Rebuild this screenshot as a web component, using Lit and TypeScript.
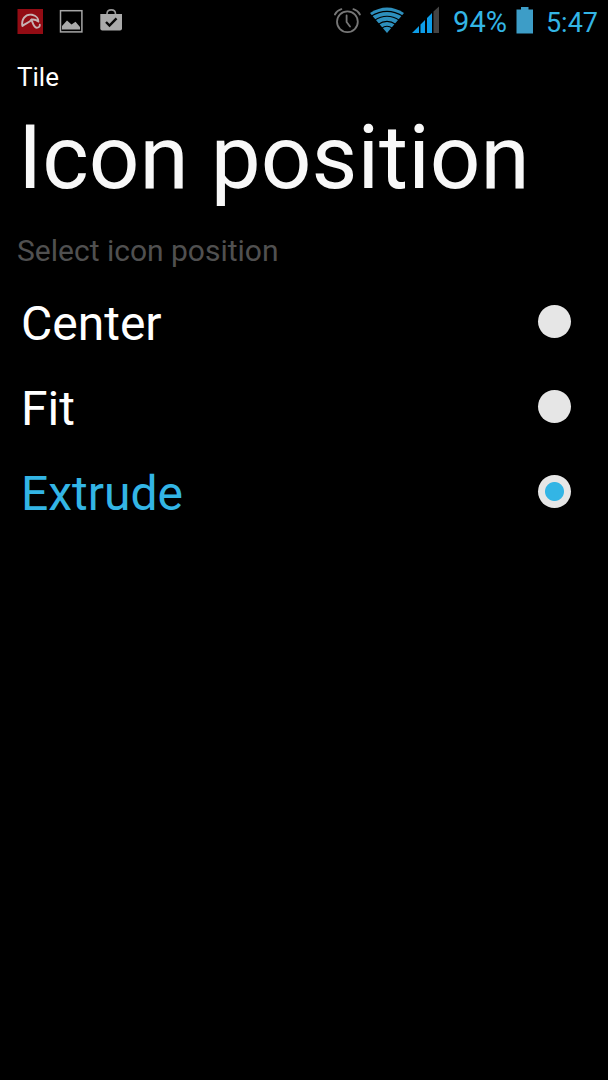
import { LitElement, html, css } from "lit";
import { customElement, state } from "lit/decorators.js";

@customElement("status-bar")
class StatusBar extends LitElement {
  static styles = css`
    :host {
      display: flex;
      justify-content: space-between;
      height: 42px;
      padding: 0 10px 0 16px;
      color: #33b5e5;
      font-size: 27px;
      line-height: 46px;
    }
    .group {
      display: flex;
      align-items: flex-start;
    }
    .notices {
      gap: 12px;
    }
    .system {
      gap: 8px;
    }
    svg {
      display: block;
      flex: none;
    }
    .battery {
      margin: 0 4px 0 1px;
    }
    .level {
      margin-left: 5px;
      font-size: 29px;
      line-height: 45px;
    }
  `;

  render() {
    return html`
      <div class="group notices">
        <svg width="28" height="42" viewBox="0 0 28 42" aria-hidden="true">
          <rect x="1.5" y="9" width="25.5" height="25" fill="#930c14" />
          <path d="M6.4 26C5.2 20 9 13.5 16 14.8C20.5 15.8 22.7 18.8 22.4 21.6C20 19.6 17.6 19.2 15.4 19.6C14 22.5 10 23 6.4 26Z"
            fill="#930c14" stroke="#c6b3b4" stroke-width="1.9" stroke-linejoin="round" />
          <path d="M15.4 19.6C17 23.5 17.8 27.5 20.6 27.7C22.8 27.7 24 26.5 23.8 24.8"
            fill="none" stroke="#c6b3b4" stroke-width="1.9" stroke-linecap="round" />
        </svg>
        <svg width="28" height="42" viewBox="0 0 28 42" aria-hidden="true">
          <rect x="4.5" y="10.7" width="21.4" height="21.2" fill="none" stroke="#a6a6a6" stroke-width="1.5" />
          <path d="M6 29.5V26L11 20.5L15.5 24.5L19.5 21.8L24 27V29.5Z" fill="#aaa" />
        </svg>
        <svg width="28" height="42" viewBox="0 0 28 42" aria-hidden="true">
          <path d="M11 14C11 8.5 19.5 8.5 19.5 14" fill="none" stroke="#999" stroke-width="1.6" />
          <path d="M4.3 14H26V28.5Q26 30.5 24 30.5H6.3Q4.3 30.5 4.3 28.5Z" fill="#aaa" />
          <path d="M10 22L13.5 25.5L20.5 18.3" fill="none" stroke="#080808" stroke-width="2.4" />
        </svg>
      </div>
      <div class="group system">
        <svg width="28" height="42" viewBox="0 0 28 42" aria-hidden="true">
          <g fill="none" stroke="#777" stroke-width="1.8" stroke-linecap="round">
            <circle cx="13.4" cy="21.7" r="10.4" />
            <path d="M12.6 15.5V22L16 26.5M.9 14.5Q2.9 10.5 7.4 9.2M25.9 14.5Q23.9 10.5 19.4 9.2" />
          </g>
        </svg>
        <svg width="34" height="42" viewBox="0 0 34 42" aria-hidden="true">
          <path d="M0 13Q17 2 34 13L17 33Z" fill="#2d8fbd" />
          <path d="M1 16.2Q17 6.6 33 16.2M4.5 20.4Q17 12.2 29.5 20.4M8 24.5Q17 18.2 26 24.5M11.5 28.4Q17 24.2 22.5 28.4"
            fill="none" stroke="#000" stroke-width="1.1" />
        </svg>
        <svg width="28" height="42" viewBox="0 0 28 42" aria-hidden="true">
          <path d="M0 33L7 26V33ZM8.5 24.5L13 20V33H8.5ZM15 18L20 13V33H15Z" fill="#0d9de8" />
          <path d="M21.5 11.5L27 6.5V33H21.5Z" fill="#444" />
        </svg>
        <span class="level">94%</span>
        <svg class="battery" width="18" height="42" viewBox="0 0 18 42" aria-hidden="true">
          <path d="M.5 9.5H5V7H12.5V9.5H17V33.5H.5Z" fill="#3d9dc7" />
        </svg>
        <time>5:47</time>
      </div>
    `;
  }
}

@customElement("app-root")
class AppRoot extends LitElement {
  static styles = css`
    :host {
      display: block;
      min-height: 100vh;
      background: #000;
      color: #fff;
      font-family: Roboto, "Noto Sans", sans-serif;
    }
    .page {
      padding: 15px 17px 0;
    }
    .section {
      margin: 0;
      font-size: 26px;
      line-height: 40px;
    }
    .title {
      margin: 0 0 2px;
      padding-left: 1px;
      color: #f8f8f8;
      font-size: 89px;
      font-weight: 400;
      line-height: 122px;
      white-space: nowrap;
    }
    .choices {
      margin: 0;
      padding: 0;
      border: 0;
    }
    .hint {
      padding: 0;
      color: #505050;
      font-size: 30px;
      line-height: 60px;
    }
    .choice {
      display: flex;
      align-items: center;
      justify-content: space-between;
      padding: 0 20px 0 4px;
      font-size: 48px;
      line-height: 85px;
    }
    .choice.selected {
      color: #33b5e5;
    }
    .radio {
      appearance: none;
      flex: none;
      width: 33px;
      height: 33px;
      margin: 0 0 4px;
      border-radius: 50%;
      background: #e6e6e6;
    }
    .radio:checked {
      background: radial-gradient(circle, #33b5e5 9px, #e6e6e6 10px);
    }
    .radio:focus-visible {
      outline: 2px solid #33b5e5;
      outline-offset: 3px;
    }
  `;

  @state() private position = "Extrude";

  render() {
    return html`
      <status-bar></status-bar>
      <main class="page">
        <p class="section">Tile</p>
        <h1 class="title">Icon position</h1>
        <fieldset class="choices">
          <legend class="hint">Select icon position</legend>
          ${["Center", "Fit", "Extrude"].map(
            (name) => html`
              <label class="choice ${name === this.position ? "selected" : ""}">
                <span>${name}</span>
                <input
                  class="radio"
                  type="radio"
                  name="position"
                  .value=${name}
                  .checked=${name === this.position}
                  @change=${() => (this.position = name)}
                />
              </label>
            `
          )}
        </fieldset>
      </main>
    `;
  }
}
